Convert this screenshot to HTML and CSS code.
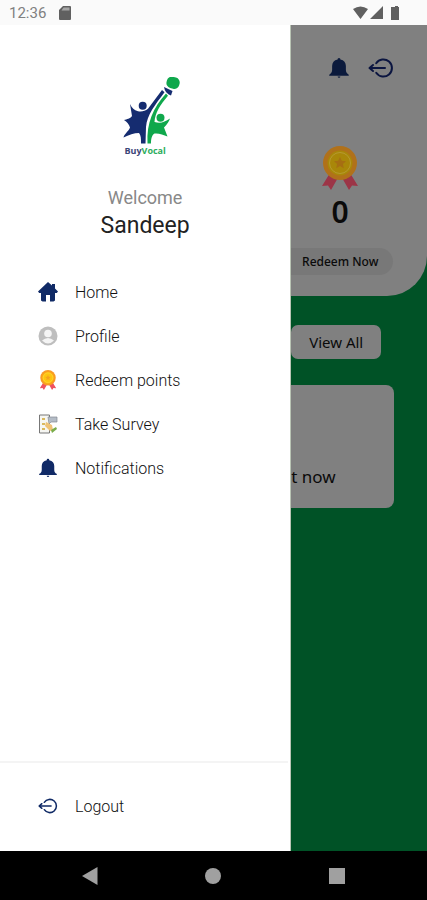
FILE: index.html
```html
<!DOCTYPE html>
<html lang="en">
<head>
<meta charset="utf-8">
<meta name="viewport" content="width=device-width, initial-scale=1">
<title>BuyVocal</title>
<link rel="stylesheet" href="styles.css">
</head>
<body>
<svg class="defs" width="0" height="0" aria-hidden="true">
  <symbol id="bell" viewBox="0 0 24 24">
    <path d="M12 1a1.500 1.500 0 0 1 1.500 1.700c4 .8 6 3.500 6 7v4.300c0 2.500 1 3.800 2.800 5 .6.300.6 1.500-.2 1.500H1.900c-.8 0-.8-1.200-.2-1.500 1.800-1.200 2.800-2.500 2.800-5V9.700c0-3.500 2-6.200 6-7A1.500 1.500 0 0 1 12 1z"/>
    <path d="M10.500 21.200h3a1.500 1.500 0 0 1-3 0z"/>
  </symbol>
  <symbol id="logout" viewBox="0 0 26 22">
    <g fill="none" stroke="currentColor" stroke-width="2" stroke-linecap="round" stroke-linejoin="round">
      <path d="M8.200 6.200a8.600 8.600 0 1 1 0 9.600"/>
      <path d="M17 11H2M5 8l-3.500 3L5 14"/>
    </g>
  </symbol>
  <symbol id="medal" viewBox="0 0 36 44">
    <path class="ribbon" d="M8 27 0 40l6-.5L9 44l8-14zM28 27l8 13-6-.5-3 4.500-8-14z"/>
    <circle class="rim" cx="18" cy="17" r="17"/>
    <circle class="face" cx="18" cy="17" r="12.500"/>
    <circle class="ring" cx="18" cy="17" r="10.500"/>
    <path class="star" d="m18 11 1.800 3.800 4.200.5-3.100 2.800.9 4.100-3.800-2.100-3.800 2.100.9-4.100-3.100-2.800 4.200-.5z"/>
  </symbol>
</svg>
<div class="screen">
  <header class="status">
    <span>12:36</span>
    <svg class="sd" viewBox="0 0 12 14"><path d="M4 0h7a1 1 0 0 1 1 1v12a1 1 0 0 1-1 1H1a1 1 0 0 1-1-1V4z" fill="#606060"/><path d="M4.500 1.500h6v3h-8z" fill="#a5a5a5"/></svg>
    <svg class="signals" viewBox="0 0 46 14" fill="#606060"><path d="M0 3q7.500-5 15 0L7.500 13zM30 0v13H17zM40 1h2V0h3v1h1v13h-8V1z"/></svg>
  </header>
  <div class="stage">
    <aside class="drawer">
      <div class="brand">
        <svg class="logo" viewBox="0 0 72 68" aria-hidden="true">
          <g transform="translate(14)">
            <g fill="#152c70">
              <circle cx="19.700" cy="28.700" r="4"/>
              <path d="M7 27c2 4 4 6 8 7.300 4 .5 7 0 10-2.500L39 13l2.500 2.300C32 28 24 38 23 50l-.5 16.500H18c0-5 0-8-2-10.500-5 0-10 2-15.500 4.500 1-4 5-6 6.500-10C6 47 4 45 1 43c3-1 6-1 8-4-.5-4-1.500-8-2-12z"/>
              <path d="m41 10 8.500 4-1.500 4.500q-6-2-7-8.500z"/>
            </g>
            <g fill="#0fa84c">
              <rect x="43.500" y="0" width="13" height="11.500" rx="5" transform="rotate(15 50 6)"/>
              <circle cx="37.500" cy="40.700" r="4"/>
              <path d="m43 16.500 2 2.200C37 28 32 36 31.500 45c6 2 10 0 15.500-3.500-1 3-3 6-6 9l3.500 9c-4-2-9-3.500-13-3-3 2-3.500 6-3.500 10h-3.500C23.500 46 30 31 43 16.500z"/>
            </g>
          </g>
        </svg>
        <p class="wordmark">Buy<span>Vocal</span></p>
      </div>
      <p class="welcome">Welcome</p>
      <h1 class="name">Sandeep</h1>
      <nav class="menu">
        <a href="#home"><svg viewBox="0 0 20 20"><path d="M10 0 0 9.500l1.200 1.500H3v7.500l1.500 1H8V13h4v6.500h3.500l1.500-1V11h1.800L20 9.500 17 6.500V2h-3v1.500z" fill="#102a66"/></svg>Home</a>
        <a href="#profile"><svg viewBox="0 0 20 20"><circle cx="10" cy="10" r="9.500" fill="#bebebe"/><circle cx="10" cy="7.500" r="3.800" fill="#f4f4f4"/><path d="M4 14.500q6-5 12 0-6 6-12 0z" fill="#f4f4f4"/></svg>Profile</a>
        <a href="#redeem"><svg class="medal" viewBox="0 0 36 44"><use href="#medal"/></svg>Redeem points</a>
        <a href="#survey"><svg viewBox="0 0 20 20"><path d="M1.500 1h10v18h-10z" fill="#f6f6f2" stroke="#777"/><path d="M4 4h3v2H4zM4 9h3v2H4zM4 14h3v2H4z" fill="#d9b85e"/><path d="M10 3h9v5h-6l-2 2z" fill="#b4bcc6" stroke="#858b92" stroke-width=".7"/><path d="m8 8 6 3 1 5-3 1-5-5z" fill="#efc275"/><path d="m13 16 5-3 1 2-5 4z" fill="#79ac4a"/></svg>Take Survey</a>
        <a href="#notifications"><svg class="navy" viewBox="0 0 24 24"><use href="#bell"/></svg>Notifications</a>
      </nav>
      <footer class="foot">
        <a href="#logout"><svg class="navy" viewBox="0 0 26 22"><use href="#logout"/></svg>Logout</a>
      </footer>
    </aside>
    <main class="page">
      <section class="points">
        <div class="actions">
          <button class="icon" aria-label="Notifications"><svg viewBox="0 0 24 24"><use href="#bell"/></svg></button>
          <button class="icon" aria-label="Logout"><svg viewBox="0 0 26 22"><use href="#logout"/></svg></button>
        </div>
        <svg class="medal award" viewBox="0 0 36 44"><use href="#medal"/></svg>
        <strong class="score">0</strong>
        <button class="redeem">Redeem Now</button>
      </section>
      <button class="view">View All</button>
      <section class="card">t now</section>
    </main>
  </div>
  <footer class="system">
    <button aria-label="Back"><svg viewBox="0 0 18 18"><path d="M16.500 0v18L1 9z"/></svg></button>
    <button aria-label="Home"><svg viewBox="0 0 18 18"><circle cx="9" cy="9" r="8"/></svg></button>
    <button aria-label="Recent apps"><svg viewBox="0 0 18 18"><path d="M1 1h16v16H1z"/></svg></button>
  </footer>
</div>
</body>
</html>
```
FILE: styles.css
```css
* { box-sizing: border-box; }
body { margin: 0; font-family: Roboto, "Liberation Sans", sans-serif; color: #222; }
p, h1 { margin: 0; font-weight: 400; }
a { color: inherit; text-decoration: none; }
button { border: 0; padding: 0; font: inherit; color: inherit; background: none; }
svg { display: block; }
.defs { position: absolute; }
.screen { min-height: 100vh; display: flex; flex-direction: column; }

.status { height: 25px; padding: 0 28px 0 9px; display: flex; align-items: center; gap: 13px; background: #fafafa; color: #808080; font-size: 15px; }
.sd { width: 12px; height: 14px; }
.signals { width: 46px; height: 14px; margin-left: auto; }

.stage { flex: 1; display: grid; grid-template-columns: 68.2% 1fr; background: #005226; }
.drawer { display: flex; flex-direction: column; background: #fff; border-right: 1px solid #b9c4b4; }
.brand { padding-top: 52px; display: flex; flex-direction: column; align-items: center; }
.logo { width: 72px; height: 68px; }
.wordmark { font: 700 9px/12px "Open Sans", sans-serif; color: #3b4678; }
.wordmark span { color: #2dad5d; }
.welcome { margin-top: 28px; text-align: center; font-size: 18px; line-height: 26px; color: #888; }
.name { text-align: center; font-size: 23px; line-height: 30px; color: #222; }
.menu { margin-top: 29px; }
.menu a, .foot a { display: flex; align-items: center; gap: 17px; height: 44px; padding-left: 38px; font-size: 16px; font-weight: 300; color: #111; }
.menu svg, .foot svg { width: 20px; height: 20px; }
.navy { color: #102a66; fill: #102a66; }
.foot { margin: auto 2px 0 0; padding: 21px 0 23px; border-top: 2px solid #f4f4f4; }

.page { color: #0a0a0a; font-family: "Noto Sans", sans-serif; }
.points { height: 271px; padding-top: 28px; display: flex; flex-direction: column; background: #808080; border-bottom-right-radius: 40px; }
.actions { display: flex; gap: 16px; padding-left: 35px; }
.icon svg { width: 26px; height: 30px; color: #0b1540; fill: #0b1a3c; }
.icon:first-child svg { padding: 2px; }
.medal { --ribbon: #ef5360; --rim: #f99b22; --face: #fdc50f; --ring: #ffdc50; --star: #f5a21b; }
.award { width: 36px; height: 44px; margin: 63px 0 0 31px; --ribbon: #9c3547; --rim: #b0711a; --face: #a98709; --ring: #b59a30; --star: #a66f12; }
.ribbon { fill: var(--ribbon); }
.rim { fill: var(--rim); }
.face { fill: var(--face); }
.ring { fill: none; stroke: var(--ring); }
.star { fill: var(--star); }
.score { width: 98px; text-align: center; font-size: 30px; line-height: 44px; font-weight: 600; }
.redeem { width: 102px; height: 27px; margin-top: 14px; padding-right: 4px; border-radius: 0 14px 14px 0; background: #787878; font-size: 12px; font-weight: 500; }
.view { display: block; width: 90px; height: 34px; margin-top: 29px; border-radius: 7px; background: #808080; font-size: 15px; }
.card { height: 123px; margin: 26px 33px 0 0; padding-bottom: 19px; display: flex; align-items: flex-end; border-radius: 0 8px 8px 0; background: #808080; font-size: 17px; line-height: 24px; }

.system { height: 49px; padding: 0 28px; display: grid; grid-template-columns: repeat(3, 1fr); justify-items: center; align-items: center; background: #000; }
.system svg { width: 18px; height: 18px; fill: #a0a0a0; }
```
